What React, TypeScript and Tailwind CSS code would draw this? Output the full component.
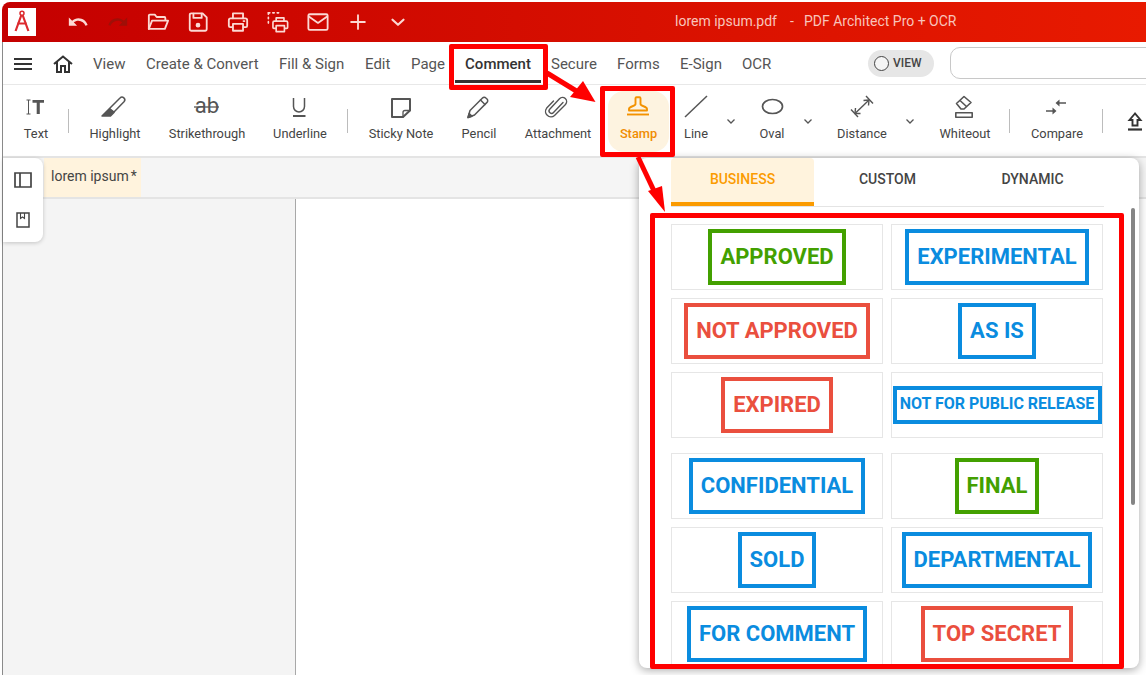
import React from "react";

const S = { fill: "none", stroke: "currentColor", strokeWidth: 1.7, strokeLinecap: "round" as const, strokeLinejoin: "round" as const };

function Logo() {
  return (
    <svg viewBox="0 0 28 28" className="w-[28px] h-[28px]">
      <circle cx="14" cy="5.2" r="2" fill="none" stroke="#dc2a2e" strokeWidth="1.5" />
      <path d="M13.4 7 L7.6 23 M14.6 7 L20.4 23" fill="none" stroke="#dc2a2e" strokeWidth="2.2" />
      <path d="M9.5 15.5 H18.5" fill="none" stroke="#dc2a2e" strokeWidth="2" />
    </svg>
  );
}

function TitleIcon({ name }: { name: string }) {
  const cls = name === "redo" ? "w-[22px] h-[22px] text-[#9f0f07]" : "w-[22px] h-[22px] text-[#fcd9d3]";
  return (
    <svg viewBox="0 0 24 24" className={cls}>
      {name === "undo" && <path fill="currentColor" d="M12.5 8c-2.65 0-5.05.99-6.9 2.6L2 7v9h9l-3.62-3.62c1.39-1.16 3.16-1.88 5.12-1.88 3.54 0 6.55 2.31 7.6 5.5l2.37-.78C21.08 11.03 17.15 8 12.5 8z" />}
      {name === "redo" && <path fill="currentColor" d="M18.4 10.6C16.55 8.99 14.15 8 11.5 8c-4.65 0-8.58 3.03-9.96 7.22L3.9 16c1.05-3.19 4.05-5.5 7.6-5.5 1.95 0 3.73.72 5.12 1.88L13 16h9V7l-3.6 3.6z" />}
      {name === "open" && <g {...S} strokeWidth={2}><path d="M2 19.5 V5 a1 1 0 0 1 1-1 h5.5 l2 2.5 H19 a1 1 0 0 1 1 1 V10" /><path d="M2 19.5 L5.5 10.5 H23 L19.5 19.5 Z" /></g>}
      {name === "save" && <g {...S} strokeWidth={2}><path d="M3 4 a1.5 1.5 0 0 1 1.5-1.5 H17 L21.5 7 V20 a1.5 1.5 0 0 1-1.5 1.5 H4.5 A1.5 1.5 0 0 1 3 20 Z" /><path d="M7 3 V7.5 H16 V3" /><circle cx="12" cy="15.5" r="1.6" fill="currentColor" /></g>}
      {name === "print" && <g {...S} strokeWidth={2}><path d="M6.5 8 V2.5 H17.5 V8" /><path d="M6 17.5 H3.5 a1.5 1.5 0 0 1-1.5-1.5 V10 a2 2 0 0 1 2-2 H20 a2 2 0 0 1 2 2 V16 a1.5 1.5 0 0 1-1.5 1.5 H18" /><path d="M6.5 14 H17.5 V21.5 H6.5 Z" /><path d="M18 11 H19" /></g>}
      {name === "printsel" && <g {...S} strokeWidth={1.8}><path d="M1.5 2 H15.5" strokeDasharray="1.6 3.2" /><path d="M1.5 2 V14" strokeDasharray="1.6 3.2" /><path d="M10 11 V7.5 H18.5 V11" /><path d="M9.5 19 H7.5 a1 1 0 0 1-1-1 V12.5 a1.5 1.5 0 0 1 1.5-1.5 H21 a1.5 1.5 0 0 1 1.5 1.5 V18 a1 1 0 0 1-1 1 H19.5" /><path d="M10 16 H19 V22.5 H10 Z" /></g>}
      {name === "mail" && <g {...S} strokeWidth={2}><rect x="1.5" y="3.5" width="21" height="17" rx="1.5" /><path d="M2 6 L12 13 L22 6" /></g>}
      {name === "plus" && <path {...S} strokeWidth={2} d="M12 4.5 V19.5 M4.5 12 H19.5" />}
      {name === "chev" && <path {...S} strokeWidth={2.4} d="M6 9.5 L12 15 L18 9.5" />}
    </svg>
  );
}

function ToolIcon({ name }: { name: string }) {
  return (
    <svg viewBox="0 0 28 28" className="w-[28px] h-[28px]">
      {name === "text" && <g>
        <path d="M4.5 6 H8.5 M4.5 20 H8.5 M6.5 6 V20" fill="none" stroke="currentColor" strokeWidth="1" />
        <path d="M10.5 6 H22 V8.8 H17.8 V20 H14.7 V8.8 H10.5 Z" fill="currentColor" />
      </g>}
      {name === "highlight" && <g {...S} strokeWidth={1.5}>
        <path d="M8.5 14.5 L19 4 a2.6 2.6 0 0 1 4 3.7 L13 18 Z" />
        <path d="M8 15 L13 18.5 L9.5 22 H1 Z" fill="currentColor" />
      </g>}
      {name === "strike" && <g>
        <text x="14" y="19" textAnchor="middle" fontFamily="Roboto, sans-serif" fontSize="22" fill="currentColor">ab</text>
        <path d="M1 13 H26" stroke="currentColor" strokeWidth="1.3" />
      </g>}
      {name === "underline" && <g {...S} strokeWidth={1.5}>
        <path d="M7.5 4 V12.5 a5.5 5.5 0 0 0 11 0 V4" strokeLinecap="butt" />
        <path d="M7 22 H19.5" strokeLinecap="butt" strokeWidth={2} />
      </g>}
      {name === "note" && <g {...S} strokeWidth={2}>
        <path d="M5 5 H23 V16.5 L16 23 H5 Z" />
        <path d="M16 23 V18.5 a2 2 0 0 1 2-2 H23" strokeWidth={1.3} />
      </g>}
      {name === "pencil" && <g {...S} strokeWidth={1.5}>
        <path d="M3 23.5 L5 16.5 L17.5 4 a2.4 2.4 0 0 1 3.4 0 L22 5 a2.4 2.4 0 0 1 0 3.4 L9.5 21 Z" />
        <path d="M15.5 6 L20 10.5" />
        <path d="M3 23.5 L4.2 19.5 L7 22.3 Z" fill="currentColor" />
      </g>}
      {name === "clip" && <path {...S} strokeWidth={1.4} d="M19 8.5 L9.5 18.5 a2.5 2.5 0 0 1-3.8-3.3 L15.5 4.8 a4.1 4.1 0 0 1 6 5.6 L10.5 21.5 a5.4 5.4 0 0 1-7.8-7.4 L9.5 7" />}
      {name === "stamp" && <g fill="none" stroke="currentColor" strokeWidth="1.9" strokeLinejoin="round">
        <path d="M10.5 10 V4.2 a1 1 0 0 1 1-1 h3 a1 1 0 0 1 1 1 V10 c0 2.5 6.5 2 6.5 5 V16.5 H4 V15 c0-3 6.5-2.5 6.5-5 Z" />
        <path d="M2 20.5 H24" />
      </g>}
      {name === "line" && <path d="M3 23 L25 2" stroke="currentColor" strokeWidth="1.5" />}
      {name === "oval" && <ellipse cx="14.5" cy="12.5" rx="10" ry="7" fill="none" stroke="currentColor" strokeWidth="1.7" />}
      {name === "distance" && <g {...S} strokeWidth={1.4} strokeLinecap="butt">
        <path d="M3 15.5 L10 23 M18 2 L25 9.5" />
        <path d="M7.5 19 L20.5 6.5" />
        <path d="M7.5 14 L7 19.5 L12.5 19.5 M15.5 6.5 L21 6 L20.5 11.5" />
      </g>}
      {name === "whiteout" && <g {...S} strokeWidth={1.6} strokeLinecap="butt">
        <path d="M5.5 9.5 L13 2.5 L20 8.5 L13 15 H10 Z" />
        <path d="M9 6.5 L15.5 12.5" />
        <path d="M4.8 18.8 H21.2 V23.2 H4.8 Z" />
      </g>}
      {name === "compare" && <g fill="currentColor">
        <path d="M3 16.2 H9.5 V13.5 L13.5 17 L9.5 20.5 V17.8 H3 Z" />
        <path d="M23 8.2 H16.5 V5.5 L12.5 9 L16.5 12.5 V9.8 H23 Z" />
      </g>}
      {name === "upload" && <g fill="none" stroke="currentColor" strokeWidth="1.9">
        <path d="M14 7.5 L8.5 14 H11.5 V19.5 H16.5 V14 H19.5 Z" />
        <path d="M7 23.5 H21" strokeWidth="2.2" />
      </g>}
    </svg>
  );
}

function Chevron() {
  return (
    <svg viewBox="0 0 16 16" className="w-[16px] h-[16px] mt-[22px] text-[#555] shrink-0">
      <path d="M4.5 6.5 L8 10 L11.5 6.5" fill="none" stroke="currentColor" strokeWidth="1.3" />
    </svg>
  );
}

function Sep() {
  return <div className="w-px h-[24px] bg-[#bcbcbc] mt-[18px] shrink-0" />;
}

function Tool({ icon, label, cls }: { icon: string; label: string; cls: string }) {
  return (
    <div className={"h-[61px] pt-[3px] flex flex-col items-center shrink-0 text-[#555] " + cls}>
      <ToolIcon name={icon} />
      <span className="mt-[4px] h-[16px] leading-[16px] text-[12.8px] text-[#444] whitespace-nowrap">{label}</span>
    </div>
  );
}

function Stamp({ label, color, cls }: { label: string; color: string; cls?: string }) {
  const colors: Record<string, string> = {
    g: "text-[#43a000] border-[#43a000]",
    b: "text-[#0a8cdf] border-[#0a8cdf]",
    r: "text-[#ea4f3e] border-[#ea4f3e]",
  };
  return (
    <div className="h-[66px] border border-[#e6e6e6] flex items-center justify-center overflow-hidden">
      <div className={"border-[4px] whitespace-nowrap font-bold flex items-center justify-center pb-[2px] " + colors[color] + " " + (cls ?? "h-[56px] px-[8px] text-[22px]")}>
        {label}
      </div>
    </div>
  );
}

const menu: [string, string][] = [
  ["View", "w-[33px]"],
  ["Create & Convert", "w-[112px] ml-[20px]"],
  ["Fill & Sign", "w-[65px] ml-[21px]"],
  ["Edit", "w-[26px] ml-[21px]"],
  ["Page", "w-[34px] ml-[20px]"],
];
const menu2: [string, string][] = [
  ["Secure", "w-[46px] ml-[10px]"],
  ["Forms", "w-[43px] ml-[20px]"],
  ["E-Sign", "w-[42px] ml-[20px]"],
  ["OCR", "w-[30px] ml-[20px]"],
];

export default function App() {
  return (
    <div className="relative w-[1146px] h-[675px] overflow-hidden bg-white pt-[2px] pl-[2px] font-[family-name:Roboto,sans-serif] flex flex-col">
      {/* title bar */}
      <div className="h-[40px] shrink-0 rounded-tl-[8px] bg-gradient-to-r from-[#c40000] to-[#e81a00] flex items-center pl-[6px]">
        <div className="w-[28px] h-[28px] bg-white shrink-0"><Logo /></div>
        <div className="flex ml-[31px] gap-[18px]">
          {["undo", "redo", "open", "save", "print", "printsel", "mail", "plus", "chev"].map((n) => (
            <TitleIcon key={n} name={n} />
          ))}
        </div>
        <div className="ml-[266px] pb-[2px] text-[14px] text-[#f8c4bb] whitespace-nowrap flex">
          <span className="w-[115px]">lorem ipsum.pdf</span>
          <span className="w-[14px]">-</span>
          <span>PDF Architect Pro + OCR</span>
        </div>
      </div>

      <div className="flex-1 min-h-0 flex flex-col border-l border-l-[#8a8a8a]">
        {/* menu row */}
        <div className="h-[43px] shrink-0 border-b-[1px] border-[#e8e8e8] flex items-center text-[15px] text-[#555]">
          <svg viewBox="0 0 18 12" className="w-[18px] h-[12px] mt-[1px] ml-[11px] shrink-0 text-[#333]">
            <path d="M0 1 H18 M0 6 H18 M0 11 H18" stroke="currentColor" strokeWidth="1.8" />
          </svg>
          <svg viewBox="0 0 20 18" className="w-[20px] h-[18px] mt-[1px] ml-[21px] shrink-0 text-[#333]">
            <path d="M1 9 L10 1.5 L19 9 M4 7 V17 H8 V11 H12 V17 H16 V7" fill="none" stroke="currentColor" strokeWidth="2" />
          </svg>
          <div className="flex ml-[20px] mt-[2px] h-[22px] leading-[22px]">
            {menu.map(([t, c]) => (
              <span key={t} className={"whitespace-nowrap shrink-0 " + c}>{t}</span>
            ))}
            <div className="relative w-[86px] ml-[10px] flex justify-center text-[#333] font-medium">
              Comment
              <div className="absolute left-0 right-0 top-[27px] h-[3px] bg-[#333]" />
            </div>
            {menu2.map(([t, c]) => (
              <span key={t} className={"whitespace-nowrap shrink-0 " + c}>{t}</span>
            ))}
          </div>
          <div className="ml-[96px] w-[66px] h-[27px] rounded-full bg-[#e6e6e6] flex items-center pl-[6px] shrink-0">
            <div className="w-[15px] h-[15px] rounded-full border border-[#444] bg-white/60" />
            <span className="ml-[4px] text-[12px] font-medium text-[#444]">VIEW</span>
          </div>
          <div className="ml-[16px] w-[240px] h-[32px] rounded-[10px] border border-[#c8c8c8] shrink-0" />
        </div>

        {/* toolbar */}
        <div className="h-[73px] shrink-0 border-b-[2px] border-[#e4e4e4] flex pt-[6px] overflow-hidden">
          <Tool icon="text" label="Text" cls="w-[64px] ml-[1px]" />
          <Sep />
          <Tool icon="highlight" label="Highlight" cls="w-[92px]" />
          <Tool icon="strike" label="Strikethrough" cls="w-[92px]" />
          <Tool icon="underline" label="Underline" cls="w-[94px]" />
          <Sep />
          <Tool icon="note" label="Sticky Note" cls="w-[106px]" />
          <Tool icon="pencil" label="Pencil" cls="w-[50px]" />
          <Tool icon="clip" label="Attachment" cls="w-[66px] ml-[21px]" />
          <div className="w-[61px] ml-[17px] h-[61px] pt-[3px] flex flex-col items-center shrink-0 bg-[#fdf3e0] rounded-[16px] text-[#f39200]">
            <ToolIcon name="stamp" />
            <span className="mt-[4px] h-[16px] leading-[16px] text-[12.8px] font-medium text-[#f08c00]">Stamp</span>
          </div>
          <Tool icon="line" label="Line" cls="w-[54px]" />
          <Chevron />
          <Tool icon="oval" label="Oval" cls="w-[56px] ml-[5px]" />
          <Chevron />
          <Tool icon="distance" label="Distance" cls="w-[76px] ml-[8px]" />
          <div className="ml-[2px]"><Chevron /></div>
          <Tool icon="whiteout" label="Whiteout" cls="w-[88px] ml-[3px]" />
          <Sep />
          <Tool icon="compare" label="Compare" cls="w-[92px] pl-[2px]" />
          <Sep />
          <div className="ml-[18px] mt-[15px] shrink-0 text-[#333]"><ToolIcon name="upload" /></div>
        </div>

        {/* document tabs */}
        <div className="h-[41px] shrink-0 bg-[#f5f5f5] border-b-[2px] border-[#e4e4e4] flex pl-[41px]">
          <div className="w-[97px] bg-[#fff3dd] pl-[7px] pt-[9px] text-[14px] leading-[18px] text-[#444] whitespace-nowrap">
            lorem ipsum<span className="ml-[2px]">*</span>
          </div>
        </div>

        {/* workspace */}
        <div className="flex-1 min-h-0 bg-[#f4f4f4] pl-[292px]">
          <div className="h-full bg-white border-l border-l-[#a8a8a8]" />
        </div>
      </div>

      {/* side rail */}
      <div className="absolute left-[3px] top-[158px] w-[40px] h-[84px] bg-white rounded-r-[8px] shadow-[0_1px_4px_rgba(0,0,0,0.2)] flex flex-col items-center pt-[14px] gap-[24px] text-[#444]">
        <svg viewBox="0 0 18 16" className="w-[18px] h-[16px]">
          <path d="M1 1 H17 V15 H1 Z M6 1 V15" fill="none" stroke="currentColor" strokeWidth="1.7" />
        </svg>
        <svg viewBox="0 0 14 16" className="w-[14px] h-[16px]">
          <path d="M1 1 H13 V15 H1 Z" fill="none" stroke="currentColor" strokeWidth="1.5" />
          <path d="M4.5 1 V6.5 L6.5 5 L8.5 6.5 V1" fill="none" stroke="currentColor" strokeWidth="1.1" />
        </svg>
      </div>

      {/* stamp dropdown */}
      <div className="absolute left-[639px] top-[158px] w-[500px] h-[510px] bg-white rounded-[8px] shadow-[0_2px_10px_rgba(0,0,0,0.35)] overflow-hidden pl-[32px]">
        <div className="w-[433px] h-[49px] border-b-[1px] border-[#e4e4e4] flex text-[14px] font-medium text-[#444]">
          <div className="w-[143px] h-[48px] bg-[#fff3dd] border-b-[4px] border-[#fb9b00] rounded-t-[4px] text-[#fb9b00] flex items-center justify-center pb-[2px]">BUSINESS</div>
          <div className="w-[147px] flex items-center justify-center pb-[6px]">CUSTOM</div>
          <div className="w-[143px] flex items-center justify-center pb-[6px]">DYNAMIC</div>
        </div>
        <div className="w-[432px] pt-[17px] flex flex-col">
          <div className="grid grid-cols-2 gap-[8px]">
            <Stamp label="APPROVED" color="g" />
            <Stamp label="EXPERIMENTAL" color="b" />
            <Stamp label="NOT APPROVED" color="r" />
            <Stamp label="AS IS" color="b" />
            <Stamp label="EXPIRED" color="r" />
            <Stamp label="NOT FOR PUBLIC RELEASE" color="b" cls="h-[38px] text-[16px] w-[209px] shrink-0" />
          </div>
          <div className="grid grid-cols-2 gap-[8px] mt-[15px]">
            <Stamp label="CONFIDENTIAL" color="b" />
            <Stamp label="FINAL" color="g" />
            <Stamp label="SOLD" color="b" />
            <Stamp label="DEPARTMENTAL" color="b" />
            <Stamp label="FOR COMMENT" color="b" />
            <Stamp label="TOP SECRET" color="r" />
          </div>
        </div>
        <div className="absolute left-[492px] top-[50px] w-[4px] h-[297px] rounded-full bg-[#858585]" />
      </div>

      {/* red annotations */}
      <div className="absolute left-[449px] top-[44px] w-[99px] h-[46px] border-[5px] border-[#ff0000] rounded-[2px]" />
      <div className="absolute left-[600px] top-[86px] w-[75px] h-[71px] border-[5px] border-[#ff0000] rounded-[2px]" />
      <div className="absolute left-[650px] top-[213px] w-[474px] h-[456px] border-[5px] border-[#ff0000] rounded-[2px]" />
      <svg viewBox="0 0 1146 675" className="absolute left-0 top-0 w-[1146px] h-[675px] pointer-events-none">
        <path d="M547 73 L578 92" stroke="#ff0000" strokeWidth="5" />
        <path d="M595.5 102 L570 97 L583 81 Z" fill="#ff0000" />
        <path d="M638 157 L655 193" stroke="#ff0000" strokeWidth="5" />
        <path d="M665 212 L648 191 L662 186 Z" fill="#ff0000" />
      </svg>
    </div>
  );
}
